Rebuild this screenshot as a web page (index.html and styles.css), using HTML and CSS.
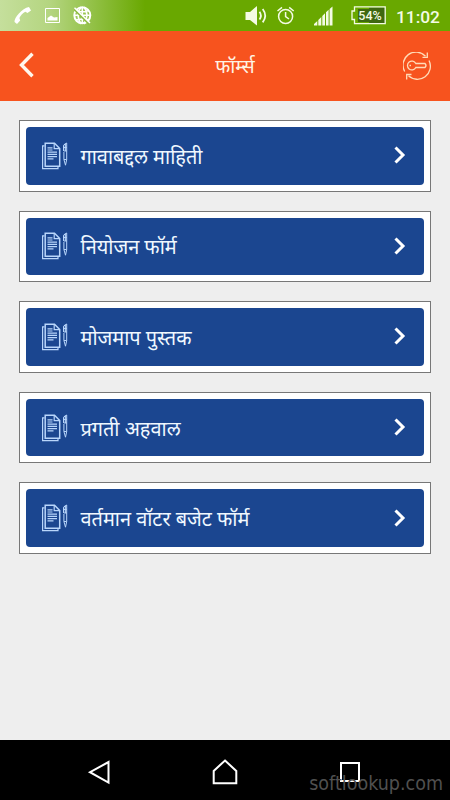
FILE: index.html
```html
<!DOCTYPE html>
<html lang="mr">
<head>
<meta charset="utf-8">
<title>फॉर्म्स</title>
<link rel="stylesheet" href="styles.css">
</head>
<body>
<svg width="0" height="0" class="defs">
  <symbol id="doc" viewBox="0 0 28 28">
    <g fill="none" stroke="#b9d6fb" stroke-width="1.2">
      <path d="M4.200 1.300H13.500L18.700 6.500V24.200H4.200Z" stroke-width="1.500"/>
      <path d="M13.200 1.600V6.700H18.300M3.500 3.800H1.600V26.600H17V24.500"/>
      <path d="M6.500 5.800H11.500M6.500 8H11.500M6.500 10.200H16M6.500 12.400H16M6.500 14.600H16M6.500 16.800H12.500" stroke-width="1.200"/>
      <path d="M22.500 3.200L25.700 1V17.500L24.500 23.200L22.900 17.500V10M22.500 3.200V9M23 5.500H25.700M22.800 9H25.700M23 17.500H25.700" stroke-width="1"/>
      <path d="M24.300 1.500V9" stroke-width="1.2"/>
    </g>
  </symbol>
  <symbol id="next" viewBox="0 0 12 18">
    <path d="M1.500 1.500L9 9L1.500 16.500" fill="none" stroke="#fff" stroke-width="3"/>
  </symbol>
</svg>
<div class="screen">
  <header class="status">
    <svg class="notes" width="100" height="31" viewBox="0 0 100 31">
      <path d="M14.500 22C14 18 22 8 29 7L31 10.500L27.500 13L25.300 11.700C22.500 13 20.500 15.500 19.400 18L20.200 20.500L17 24Z" fill="#fff"/>
      <path d="M45.500 8.500H59.500V22.500H45.500Z" fill="none" stroke="#fff"/>
      <path d="M47.500 20.500V18L51 15.500L54 17.500L57.500 17V20.500Z" fill="#fff"/>
      <circle cx="82.300" cy="15.300" r="8" fill="none" stroke="#fff" stroke-width="2"/>
      <path d="M82.300 7V24M74 15.300H91M76 10.500Q82 13 89 10.500M76 20Q82 18 89 20M81 7Q75 15 81 24M84 7Q90 15 84 24" fill="none" stroke="#fff" stroke-width="1.600"/>
      <path d="M74.500 9.600L89 24" stroke="#8fbd45" stroke-width="1.800"/>
      <path d="M74.500 7.800L90 23" stroke="#fff" stroke-width="1.500"/>
    </svg>
    <svg class="signals" width="92" height="31" viewBox="242 0 92 31">
      <path d="M245.500 12H250L257 6V25.500L250 20H245.500Z" fill="#f4fbe4"/>
      <path d="M259.500 11.800Q262.300 15.700 259.500 19.600M262.700 9Q267.700 15.700 262.700 22.400" fill="none" stroke="#f4fbe4" stroke-width="1.800"/>
      <circle cx="285.600" cy="16.500" r="7" fill="none" stroke="#f4fbe4" stroke-width="1.500"/>
      <path d="M285.600 12V16.500L289 19M277.500 11L282 7.400M289.200 7.400L293.700 11" fill="none" stroke="#f4fbe4" stroke-width="1.500"/>
      <path d="M314 25.500V24L317.300 21V25.500ZM318.300 25.500V20L321.300 17V25.500ZM322.300 25.500V16L325 13.300V25.500ZM326 25.500V12.300L328.600 9.700V25.500ZM329.600 25.500V9L332.500 6.500V25.500Z" fill="#f4fbe4"/>
    </svg>
    <div class="battery">
      <svg width="35" height="19" viewBox="0 0 35 19">
        <path d="M18 1.500H34V17.500H18Z" fill="#3f6810"/>
        <path d="M7 3H19V16H7Z" fill="#3f6810"/>
        <path d="M3.500 0.800H34.200V17.700H3.500V13.500H1V5H3.500Z" fill="none" stroke="#f4fbe4" stroke-width="1.300"/>
      </svg>
      <span>54%</span>
    </div>
    <time class="clock">11:02</time>
  </header>
  <nav class="bar">
    <svg class="back" width="16" height="26" viewBox="0 0 16 26"><path d="M13.500 1.800L2.500 13L13.500 24.200" fill="none" stroke="#fff6ec" stroke-width="3.400"/></svg>
    <h1>फॉर्म्स</h1>
    <svg class="key" width="28" height="28" viewBox="0 0 28 28">
      <g fill="none" stroke="#ffdcb9" stroke-width="1.300">
        <path d="M1.700 19.500A13 13 0 0 1 22.500 4.200M26 8.500A13 13 0 0 1 5.500 23.800"/>
        <path d="M24.300 0.500V5.300H19.500M3.700 27.500V22.500H8.500"/>
        <path d="M12.800 11.500A4.400 4.400 0 1 0 12.800 15.500H22Q24 13.500 22 11.500Z"/>
        <path d="M6.500 13.500H8"/>
      </g>
    </svg>
  </nav>
  <main class="list">
    <div class="card"><a class="item"><svg class="doc"><use href="#doc"/></svg><span>गावाबद्दल माहिती</span><svg class="next"><use href="#next"/></svg></a></div>
    <div class="card"><a class="item"><svg class="doc"><use href="#doc"/></svg><span>नियोजन फॉर्म</span><svg class="next"><use href="#next"/></svg></a></div>
    <div class="card"><a class="item"><svg class="doc"><use href="#doc"/></svg><span>मोजमाप पुस्तक</span><svg class="next"><use href="#next"/></svg></a></div>
    <div class="card"><a class="item"><svg class="doc"><use href="#doc"/></svg><span>प्रगती अहवाल</span><svg class="next"><use href="#next"/></svg></a></div>
    <div class="card"><a class="item"><svg class="doc"><use href="#doc"/></svg><span>वर्तमान वॉटर बजेट फॉर्म</span><svg class="next"><use href="#next"/></svg></a></div>
  </main>
  <footer class="system">
    <svg width="24" height="26" viewBox="0 0 24 26"><path d="M21.500 3V23.500L3 13.200Z"/></svg>
    <svg width="28" height="28" viewBox="0 0 28 28"><path d="M14 2.500L25.300 13V25.300H2.700V13Z"/></svg>
    <svg width="24" height="24" viewBox="0 0 24 24"><path d="M3 3H21V21H3Z"/></svg>
    <div class="mark">softlookup.com</div>
  </footer>
</div>
</body>
</html>
```
FILE: styles.css
```css
* { box-sizing: border-box; }
body { margin: 0; font-family: "Noto Sans", Roboto, sans-serif; }
.defs { position: absolute; }
svg { display: block; flex: none; }
.screen { width: 450px; height: 800px; display: flex; flex-direction: column; background: #eee; overflow: hidden; }
.status { height: 31px; flex: none; display: flex; align-items: center; background: linear-gradient(90deg, #c5df9c 0, #b4d580 50px, #69a800 145px); }
.signals { margin-left: 142px; }
.battery { position: relative; margin-left: 17px; width: 35px; height: 19px; }
.battery span { position: absolute; left: 4px; top: 0; width: 30px; color: #f4fbe4; font: 500 12.5px/19px Roboto, sans-serif; text-align: center; }
.clock { margin: 2px 0 0 10px; color: #f4fbe4; font: 500 17.3px/20px Roboto, sans-serif; white-space: nowrap; }
.bar { height: 70px; flex: none; padding: 0 19px; display: flex; align-items: center; background: #f7531e; }
.back { margin-top: -3px; }
h1 { flex: 1; margin: -1px 0 0 8px; color: #fff3e4; font-size: 19.5px; font-weight: 400; line-height: 30px; text-align: center; padding-left: 24px; }
.list { flex: 1; padding: 19px 19px 0 19px; display: flex; flex-direction: column; gap: 19px; }
.card { height: 71.6px; flex: none; padding: 6px; border: 1px solid #777; background: #fff; }
.item { height: 57.6px; display: flex; align-items: center; padding: 0 18px 0 15px; border-radius: 4px; background: #1b4690; color: #f0f8ff; font-size: 19.9px; line-height: 30px; }
.item span { margin: 2px 0 0 11.5px; flex: 1; white-space: nowrap; }
.doc { width: 28px; height: 28px; }
.next { width: 12px; height: 18px; margin-top: -1px; }
.system { position: relative; height: 60px; flex: none; display: flex; align-items: center; justify-content: space-between; padding: 4px 88px 0 87px; background: #000; }
.system svg { fill: none; stroke: #fff; stroke-width: 2; }
.mark { position: absolute; right: 7px; top: 32px; color: #505050; font: 19.5px/24px "DejaVu Sans Condensed", "DejaVu Sans", sans-serif; }
```
